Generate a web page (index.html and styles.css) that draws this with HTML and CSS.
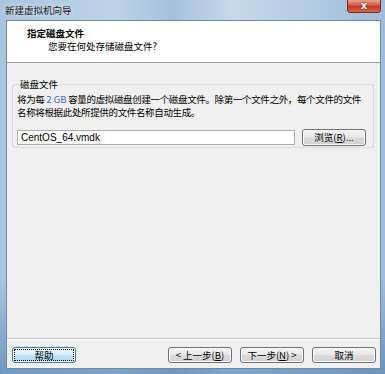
FILE: index.html
```html
<!DOCTYPE html>
<html lang="zh-CN">
<head>
    <meta charset="UTF-8">
    <title>新建虚拟机向导</title>
    <link rel="stylesheet" href="styles.css">
</head>
<body>
    <div class="window">
        <div class="titlebar">
            <span class="title">新建虚拟机向导</span>
            <span class="close-btn">x</span>
        </div>
        <div class="client">
            <div class="header">
                <div class="header-title">指定磁盘文件</div>
                <div class="header-sub">您要在何处存储磁盘文件?</div>
            </div>
            <div class="content">
                <fieldset class="group">
                    <legend>磁盘文件</legend>
                    <p class="desc">将为每 <span class="size">2 GB</span> 容量的虚拟磁盘创建一个磁盘文件。除第一个文件之外，每个文件的文件</p>
                    <p class="desc">名称将根据此处所提供的文件名称自动生成。</p>
                    <div class="file-row">
                        <input class="file-input" type="text" value="CentOS_64.vmdk">
                        <button class="btn">浏览(<u>R</u>)...</button>
                    </div>
                </fieldset>
            </div>
            <div class="footer">
                <button class="btn help-btn">帮助</button>
                <div class="nav">
                    <button class="btn">&lt; 上一步(<u>B</u>)</button>
                    <button class="btn">下一步(<u>N</u>) &gt;</button>
                    <button class="btn cancel-btn">取消</button>
                </div>
            </div>
        </div>
    </div>
</body>
</html>
```

FILE: styles.css
```css
* {
    margin: 0;
    padding: 0;
    box-sizing: border-box;
}

body {
    width: 385px;
    height: 374px;
    overflow: hidden;
    font-family: "Noto Sans CJK SC", "Liberation Sans", sans-serif;
    font-size: 9.5px;
    color: #000;
}

.window {
    width: 385px;
    height: 374px;
    display: flex;
    flex-direction: column;
    padding: 0 4px 5px 6px;
    background:
        linear-gradient(180deg, rgba(255, 255, 255, 0) 75%, rgba(40, 100, 160, 0.45) 100%),
        linear-gradient(90deg, #a9c4df 0%, #bdd3e8 30%, #a6c0da 45%, #c6d9ec 60%, #b4cbe3 80%, #9fbcd9 100%);
}

.titlebar {
    height: 20px;
    display: flex;
    align-items: flex-start;
    justify-content: space-between;
}

.title {
    margin-top: 4px;
    margin-left: -1px;
    line-height: 12px;
    color: #1a1a1a;
    text-shadow: 0 0 6px rgba(255, 255, 255, 0.9);
}

.close-btn {
    width: 34px;
    height: 13px;
    border: 1px solid #7a2a22;
    border-top: none;
    border-radius: 0 0 4px 4px;
    background: linear-gradient(#eaa496 0%, #d4553f 45%, #c23a24 55%, #d66a4e 100%);
    color: #fff;
    font-family: "DejaVu Sans", sans-serif;
    font-weight: bold;
    font-size: 10px;
    line-height: 11px;
    text-align: center;
    text-shadow: 0 0 2px #6a1a10;
}

.client {
    flex: 1;
    display: flex;
    flex-direction: column;
    background: #f0f0f0;
    border: 1px solid #6f89a5;
}

.header {
    height: 42px;
    background: #fff;
    border-bottom: 1px solid #a0a0a0;
    padding: 6px 0 0 20px;
}

.header-title {
    font-weight: bold;
    line-height: 13px;
}

.header-sub {
    margin-left: 21px;
    line-height: 13px;
}

.content {
    flex: 1;
    padding: 15px 6px 0 5px;
}

.group {
    border: 1px solid #dcdcdc;
    border-radius: 3px;
    padding: 0 6px 1px 4px;
}

.group legend {
    margin-left: 2px;
    padding: 0 1px;
    line-height: 12px;
}

.desc {
    line-height: 13px;
    letter-spacing: -0.35px;
    white-space: nowrap;
}

.desc:first-of-type {
    margin-top: 3px;
}

.size {
    color: #3a6bc4;
    letter-spacing: 0;
}

.file-row {
    display: flex;
    align-items: center;
    gap: 7px;
    margin-top: 10px;
}

.file-input {
    width: 278px;
    height: 15px;
    border: 1px solid #abadb3;
    background: #fff;
    font-family: "Liberation Sans", "Noto Sans CJK SC", sans-serif;
    font-size: 10px;
    padding: 0 3px;
    line-height: 13px;
    outline: none;
}

.btn {
    height: 17px;
    width: 64px;
    border: 1px solid #707070;
    border-radius: 3px;
    background: linear-gradient(#f2f2f2 0%, #ebebeb 45%, #dddddd 50%, #cfcfcf 100%);
    box-shadow: inset 0 0 0 1px #fbfbfb;
    font-family: "Noto Sans CJK SC", "Liberation Sans", sans-serif;
    font-size: 9.5px;
    line-height: 13px;
    color: #000;
    text-align: center;
}

.footer {
    height: 30px;
    border-top: 1px solid #c9c9c9;
    box-shadow: inset 0 1px 0 #fff;
    display: flex;
    align-items: flex-start;
    justify-content: space-between;
    padding: 8px 4px 0 5px;
}

.footer .btn {
    height: 16px;
}

.help-btn {
    border-color: #3c7fb1;
    background: linear-gradient(#eaf6fd 0%, #d9f0fc 45%, #bee6fd 50%, #a7d9f5 100%);
    outline: 1px dotted #000;
    outline-offset: -3px;
}

.nav {
    display: flex;
    gap: 8px;
}
```
